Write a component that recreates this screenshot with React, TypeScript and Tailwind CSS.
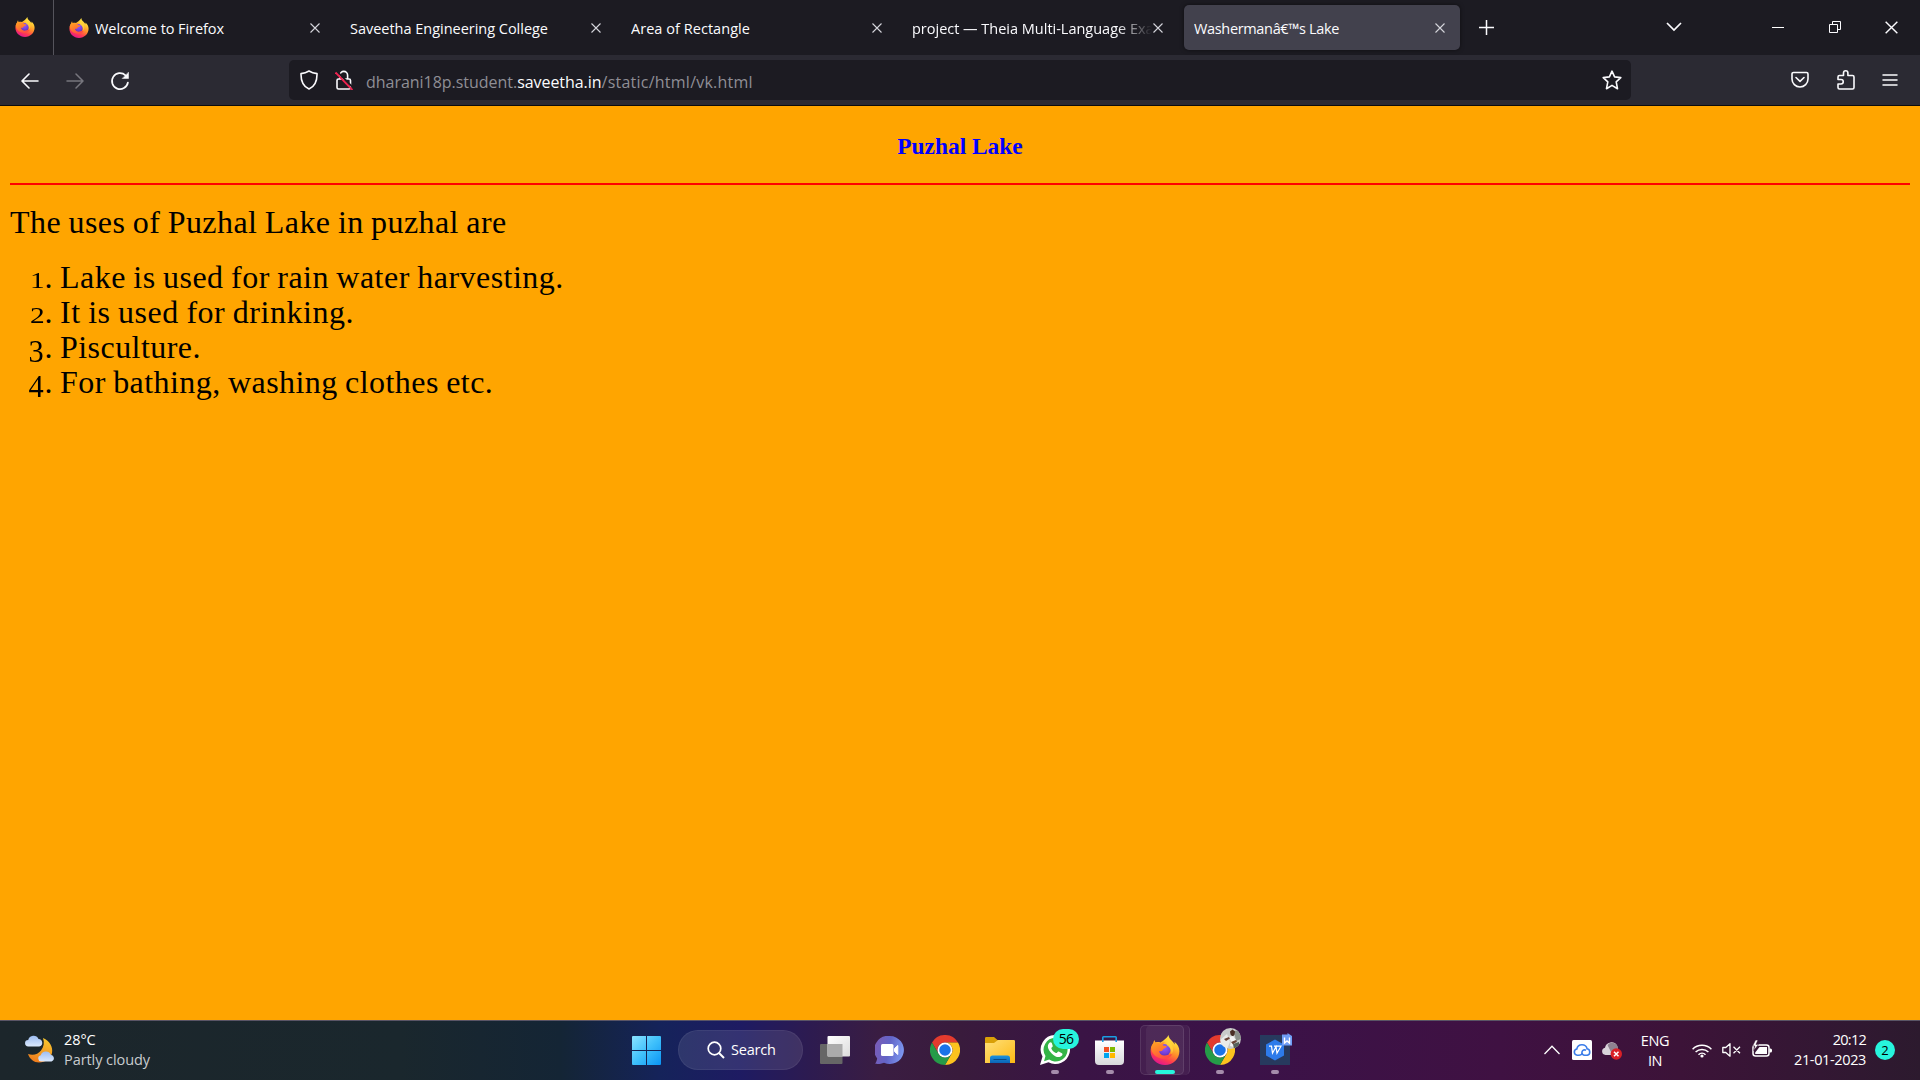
import type { ReactNode } from 'react';

function FirefoxIcon({ id, className }: { id: string; className: string }) {
  return (
    <svg viewBox="0 0 30 30" className={className}>
      <defs>
        <linearGradient id={`${id}-body`} x1="0.8" y1="0" x2="0.35" y2="1">
          <stop offset="0" stopColor="#fff44f" />
          <stop offset="0.3" stopColor="#ffc833" />
          <stop offset="0.55" stopColor="#ff8a2a" />
          <stop offset="0.78" stopColor="#ff3d4e" />
          <stop offset="1" stopColor="#e21590" />
        </linearGradient>
        <radialGradient id={`${id}-globe`} cx="0.5" cy="0.3" r="0.7">
          <stop offset="0" stopColor="#9059ff" />
          <stop offset="0.7" stopColor="#7340d8" />
          <stop offset="1" stopColor="#5b2fb8" />
        </radialGradient>
        <linearGradient id={`${id}-head`} x1="0" y1="0" x2="0.6" y2="1">
          <stop offset="0" stopColor="#ffa51f" />
          <stop offset="0.5" stopColor="#ff7a2e" />
          <stop offset="1" stopColor="#ff4a45" />
        </linearGradient>
      </defs>
      <path
        d="M18.500 0c.2 2.600 1.600 4.100 3.300 5.700 1.200 1.100 2.200 2.400 2.800 3.700.2-1 .1-1.800-.2-2.600 3.300 2.300 5 6 5 9.500C29.400 24 23 30 15 30S.6 24 .6 16.300c0-3.500 1-6.200 2.600-8.400.1-1.100.6-2.100 1.400-3 .1 1 .4 1.800.9 2.500 1.500-.5 3.200-.5 5 0C12 6.500 16.500 4 18.500 0z"
        fill={`url(#${id}-body)`}
      />
      <circle cx="14.500" cy="15" r="6" fill={`url(#${id}-globe)`} />
      <path
        d="M1.200 12.500C2 9.500 3.200 8 5.500 7.400c2 .2 3.500.3 5.200 1.300 1.200-1 2.700-1.400 4.200-1.400-1.300.9-2 1.900-2.200 3 1.200.7 2.800.6 4.100.8-.1 1.700-1.800 2.200-3.200 2.800-1 .5-.9 1.400-1.600 2.200-1 .3-2-.1-3 .3 1 3.300 4 4.800 7.500 4 2.600-.5 4-1.300 5.600-1.100-1.600 3.500-5 5-8.400 4.600C6.500 23.300 1.300 19 1.200 12.500z"
        fill={`url(#${id}-head)`}
      />
      <path d="M18.500 3c1 3.500 4.500 6.500 4.500 11 0 2-.5 3.500-1.300 5-.2-4.200-1.700-7-4.700-8.600-1.500-3 .2-5.400 1.500-7.400z" fill="#ffd93b" opacity="0.700" />
    </svg>
  );
}

function ChromeIcon() {
  return (
    <svg viewBox="0 0 24 24" className="size-[30px]">
      <path d="M1.600 6A12 12 0 0 1 22.400 6L12 6A6 6 0 0 0 6.800 15Z" fill="#e33b2e" />
      <path d="M22.400 6A12 12 0 0 1 12 24L17.200 15A6 6 0 0 0 12 6Z" fill="#fcc31e" />
      <path d="M12 24A12 12 0 0 1 1.600 6L6.800 15A6 6 0 0 0 17.200 15Z" fill="#259b48" />
      <circle cx="12" cy="12" r="6" fill="#fff" />
      <circle cx="12" cy="12" r="4.600" fill="#1a73e8" />
    </svg>
  );
}

function Cross({ className }: { className: string }) {
  return (
    <svg viewBox="0 0 10 10" className={className} fill="none" stroke="currentColor" strokeWidth="1.1">
      <path d="M.5.5l9 9M9.500.5l-9 9" />
    </svg>
  );
}

function Tab({ title, track, icon, active, faded }: { title: string; track: string; icon?: ReactNode; active?: boolean; faded?: boolean }) {
  return (
    <div className={`flex h-[45px] w-[276px] shrink-0 items-center rounded-[5px] text-[#fbfbfe] ${active ? 'bg-[#42414d] pr-[15px] pl-[10px] shadow-[0_0_4px_rgba(0,0,0,0.5)]' : 'pr-4 pl-[9px]'}`}>
      {icon && <div className="mr-[6px] shrink-0">{icon}</div>}
      <div className={`min-w-0 flex-1 overflow-hidden pt-[3px] text-[14.5px] leading-5 whitespace-nowrap ${track} ${faded ? '[mask-image:linear-gradient(to_right,black_205px,transparent_240px)]' : ''}`}>{title}</div>
      <Cross className="size-[10px] shrink-0 text-[#d5d5dc]" />
    </div>
  );
}

function TabStrip() {
  return (
    <div className="flex h-[55px] bg-[#1c1b22]">
      <div className="flex w-[54px] items-center justify-start border-r border-[#55545c] pl-[15px]">
        <FirefoxIcon id="pin" className="mb-px size-5" />
      </div>
      <div className="flex items-start gap-[5px] pt-[5px] pl-[6px]">
        <Tab title="Welcome to Firefox" track="tracking-[-0.07px]" icon={<FirefoxIcon id="fav" className="size-5" />} />
        <Tab title="Saveetha Engineering College" track="tracking-[-0.02px]" />
        <Tab title="Area of Rectangle" track="tracking-[0.04px]" />
        <Tab title="project — Theia Multi-Language Exa" track="tracking-[-0.01px]" faded />
        <Tab title="Washermanâ€™s Lake" track="tracking-[-0.34px]" active />
      </div>
      <svg viewBox="0 0 15 15" className="mt-5 ml-[19px] size-[15px]" stroke="#fbfbfe" strokeWidth="1.500">
        <path d="M7.500 0v15M0 7.500h15" />
      </svg>
      <div className="ml-auto flex h-[54px] items-center text-[#fbfbfe]">
        <svg viewBox="0 0 16 10" className="mr-[90px] h-[10px] w-4" fill="none" stroke="currentColor" strokeWidth="1.700">
          <path d="M1 1l7 7 7-7" />
        </svg>
        <div className="mr-[45px] h-px w-3 bg-white" />
        <svg viewBox="0 0 12 12" className="mr-[44px] size-3" fill="none" stroke="currentColor">
          <path d="M.5 3.500h8v8h-8zM3.500 3.500v-3h8v8h-3" />
        </svg>
        <Cross className="mr-[22px] size-[13px]" />
      </div>
    </div>
  );
}

function Toolbar() {
  return (
    <div className="flex h-[50px] items-center bg-[#2b2a33] text-[#fbfbfe]">
      <svg viewBox="0 0 18 16" className="mt-px ml-[21px] h-4 w-[18px]" fill="none" stroke="currentColor" strokeWidth="1.600" strokeLinecap="round" strokeLinejoin="round">
        <path d="M17 8H1.500M8 1L1 8l7 7" />
      </svg>
      <svg viewBox="0 0 18 16" className="mt-px ml-[27px] h-4 w-[18px] text-[#77767e]" fill="none" stroke="currentColor" strokeWidth="1.500" strokeLinecap="round" strokeLinejoin="round">
        <path d="M1 8h15.500M10 1l7 7-7 7" />
      </svg>
      <svg viewBox="0 0 20 20" className="mt-px ml-[26px] size-5" fill="none" stroke="currentColor" strokeWidth="1.700" strokeLinecap="round">
        <path d="M17.900 11.500A8 8 0 1 1 15.500 4.300" />
        <path d="M18.500 1.500v6h-6z" fill="currentColor" strokeWidth="0.500" />
      </svg>
      <div className="ml-[159px] flex h-10 w-[1342px] items-center rounded-[5px] bg-[#1c1b22]">
        <svg viewBox="0 0 18 20" className="ml-[11px] h-5 w-[18px]" fill="none" stroke="currentColor" strokeWidth="1.600" strokeLinejoin="round">
          <path d="M9 1c2.400 1.500 5 2.300 8 2.600C17.200 11.500 14.500 16.500 9 19 3.500 16.500.8 11.500 1 3.600 4 3.300 6.600 2.500 9 1z" />
        </svg>
        <svg viewBox="0 0 18 20" className="ml-[17px] h-5 w-[18px]" fill="none" stroke="currentColor" strokeWidth="1.600">
          <rect x="2" y="9" width="13.500" height="10" rx="1.500" />
          <path d="M5 9V5.200a3.800 3.800 0 0 1 7.600 0V9" />
          <path d="M2 1.500L18 17.500" stroke="#1c1b22" strokeWidth="1.800" />
          <path d="M.5 2.500L17.500 20" stroke="#f02350" strokeWidth="1.900" />
        </svg>
        <div className="mt-[4px] ml-[13px] text-[16px] leading-6 whitespace-nowrap text-[#8f8e95]">
          <span className="tracking-[-0.03px]">dharani18p.student.</span>
          <span className="tracking-[-0.05px] text-[#fbfbfe]">saveetha.in</span>
          <span className="tracking-[0.24px]">/static/html/vk.html</span>
        </div>
        <svg viewBox="0 0 20 20" className="mr-[9px] ml-auto size-5" fill="none" stroke="currentColor" strokeWidth="1.600" strokeLinejoin="round">
          <path d="M10 1.200l2.600 5.700 6.200.7-4.600 4.200 1.300 6.900L10 15.400l-5.500 3.300 1.300-6.900L1.200 7.600l6.200-.7z" />
        </svg>
      </div>
      <svg viewBox="0 0 18 18" className="ml-auto size-[18px]" fill="none" stroke="currentColor" strokeWidth="1.600" strokeLinecap="round" strokeLinejoin="round">
        <path d="M2.500 1.500h13a1.500 1.500 0 0 1 1.500 1.500v5a8 8 0 0 1-16 0V3a1.500 1.500 0 0 1 1.500-1.500zM5 6.500l4 3.800 4-3.800" />
      </svg>
      <svg viewBox="0 0 18 20" className="ml-[28px] h-5 w-[18px]" fill="none" stroke="currentColor" strokeWidth="1.600" strokeLinejoin="round">
        <path d="M2.500 5.500h4V3a2.200 2.200 0 0 1 4.400 0v2.500h4.600a1.500 1.500 0 0 1 1.500 1.500v10.500a1.500 1.500 0 0 1-1.500 1.500h-13A1.500 1.500 0 0 1 1 17.500V14h3a2 2 0 0 0 0-4.500H1V7a1.500 1.500 0 0 1 1.500-1.500z" />
      </svg>
      <svg viewBox="0 0 16 14" className="mr-[22px] mb-px ml-[27px] h-[14px] w-4" stroke="currentColor" strokeWidth="1.500" strokeLinecap="round">
        <path d="M1 2h14M1 7h14M1 12h14" />
      </svg>
    </div>
  );
}

/* Old-style figures: 1 and 2 sit at x-height, 3 and 4 hang below the baseline. */
const SMALL = 'inline-block origin-bottom-right scale-x-125 text-[23.5px] leading-[35px]';
const HANGING = 'relative top-[4px] mr-px inline-block scale-x-95';

const items = [
  { n: '1', figure: SMALL, text: 'Lake is used for rain water harvesting.', track: 'tracking-[0.47px]' },
  { n: '2', figure: SMALL, text: 'It is used for drinking.', track: 'tracking-[0.53px]' },
  { n: '3', figure: HANGING, text: 'Pisculture.', track: 'tracking-[0.45px]' },
  { n: '4', figure: HANGING, text: 'For bathing, washing clothes etc.', track: 'tracking-[0.43px]' },
];

function Page() {
  return (
    <main className='h-[914px] px-[10px] font-["Liberation_Serif",serif] text-[32px] leading-[35px] text-black'>
      <h1 className="pt-[27px] text-center text-[23.4px] leading-[27px] font-bold text-[#0000ff]">Puzhal Lake</h1>
      <div className="mt-[23px] h-[2px] bg-[#ff0000]" />
      <p className="mt-[20px] tracking-[0.43px] [word-spacing:-1px]">The uses of Puzhal Lake in puzhal are</p>
      <ol className="mt-[20px] [word-spacing:-1px]">
        {items.map((item) => (
          <li key={item.n} className="flex h-[35px] whitespace-nowrap">
            <span className="w-[42.5px] text-right">
              <span className={item.figure}>{item.n}</span>.
            </span>
            <span className={`ml-[7.500px] ${item.track}`}>{item.text}</span>
          </li>
        ))}
      </ol>
    </main>
  );
}

function TaskbarApp({ children, running, active }: { children?: ReactNode; running?: boolean; active?: boolean }) {
  return (
    <div className="relative flex h-[60px] w-[55px] shrink-0 items-center justify-center">
      {active && <div className="absolute top-[5px] left-[9px] h-[50px] w-[44px] rounded-[5px] border-r border-white/10 bg-white/5" />}
      {active && <div className="absolute top-[5px] left-[3px] h-[50px] w-[44px] rounded-[5px] border border-white/10 bg-white/5" />}
      {children}
      {running && <div className="absolute bottom-[6px] h-1 w-2 rounded-full bg-[#a58cab]" />}
      {active && <div className="absolute bottom-[6px] h-1 w-5 rounded-full bg-[#27f5dd]" />}
    </div>
  );
}

function Taskbar() {
  return (
    <footer className="flex h-[60px] items-center bg-[linear-gradient(to_right,#1c262b_0px,#1a272d_400px,#142535_560px,#15235a_660px,#1e1b62_740px,#2d1b50_810px,#3a1d42_880px,#391b3c_960px,#3a1445_1080px,#3b1248_1250px,#3f1142_1500px,#3c1338_1680px,#331733_1820px,#2c1a2e_1920px)] text-[14.5px] leading-5 text-white shadow-[inset_0_1px_0_#5a5566]">
      <div className="flex w-[620px] items-center pl-[25px]">
        <svg viewBox="0 0 30 28" className="mb-[3px] h-7 w-[30px]">
          <defs>
            <linearGradient id="moon" x1="0.600" y1="0" x2="0.300" y2="1">
              <stop offset="0" stopColor="#f7c62f" />
              <stop offset="1" stopColor="#ef7a1c" />
            </linearGradient>
            <linearGradient id="cloud" x1="0" y1="0" x2="0" y2="1">
              <stop offset="0" stopColor="#9dbdf2" />
              <stop offset="1" stopColor="#dbe9fd" />
            </linearGradient>
          </defs>
          <path d="M18 3c7 3 10 9 9 15-1.500 6-6.500 9.500-13 9.500-5 0-9-3-11-8.500 5 1.500 10 .5 13-3.500s3.500-8 2-12.500z" fill="url(#moon)" />
          <path d="M3.500 11.500a3.300 3.300 0 0 1-.3-6.600A5.500 5.500 0 0 1 13.500 4a3.800 3.800 0 0 1 .8 7.500z" fill="url(#cloud)" />
          <path d="M16 26.500a3.200 3.200 0 0 1-.2-6.300 5.400 5.400 0 0 1 10-.5 3.500 3.500 0 0 1 .7 6.800z" fill="url(#cloud)" />
        </svg>
        <div className="ml-[9px]">
          <div className="tracking-[-0.1px]">28°C</div>
          <div className="tracking-[-0.07px] text-[#c8cccf]">Partly cloudy</div>
        </div>
      </div>

      <TaskbarApp>
        <svg viewBox="0 0 29 29" className="ml-[-2px] size-[29px]">
          <defs>
            <linearGradient id="win" x1="0" y1="0" x2="1" y2="1">
              <stop offset="0" stopColor="#8be3ff" />
              <stop offset="0.500" stopColor="#3fc0fb" />
              <stop offset="1" stopColor="#0a94f5" />
            </linearGradient>
          </defs>
          <path d="M1 0h13v14H0V1a1 1 0 0 1 1-1zM15 0h13a1 1 0 0 1 1 1v13H15zM0 15h14v14H1a1 1 0 0 1-1-1zM15 15h14v13a1 1 0 0 1-1 1H15z" fill="url(#win)" />
        </svg>
      </TaskbarApp>
      <div className="ml-[3px] flex h-10 w-[125px] items-center rounded-full border border-white/[0.06] bg-white/10">
        <svg viewBox="0 0 18 18" className="ml-[28px] size-[18px]" fill="none" stroke="white" strokeWidth="1.700">
          <circle cx="7.500" cy="7.500" r="6.300" />
          <path d="M12 12l5 5" strokeWidth="2" />
        </svg>
        <span className="ml-[6px] tracking-[-0.2px]">Search</span>
      </div>
      <div className="ml-[4px] flex">
        <TaskbarApp>
          <svg viewBox="0 0 30 28" className="h-7 w-[30px]">
            <defs>
              <linearGradient id="tv" x1="0" y1="0" x2="1" y2="1">
                <stop offset="0" stopColor="#ffffff" />
                <stop offset="1" stopColor="#dcdcdc" />
              </linearGradient>
            </defs>
            <rect y="8" width="22.500" height="20" rx="1" fill="#666" />
            <rect x="7.500" width="22.500" height="20.500" rx="1" fill="url(#tv)" />
            <path d="M7.500 8h15v12.500h-15z" fill="#ababab" />
          </svg>
        </TaskbarApp>
        <TaskbarApp>
          <svg viewBox="0 0 29 28" className="h-7 w-[29px]">
            <defs>
              <linearGradient id="chat" x1="0" y1="0.300" x2="1" y2="0.500">
                <stop offset="0" stopColor="#7b5cb5" />
                <stop offset="0.500" stopColor="#6264c7" />
                <stop offset="1" stopColor="#7c97f0" />
              </linearGradient>
            </defs>
            <path d="M15 0a14 14 0 1 1-6 26.700C6 28 3 28 .2 27.800c1-1.800 1.700-3.500 2-5.300A14 14 0 0 1 15 0z" fill="url(#chat)" />
            <rect x="6" y="8" width="12.500" height="12" rx="1.500" fill="#fff" />
            <path d="M19.500 12.500l3.300-3v9l-3.300-3z" fill="#fff" stroke="#fff" strokeLinejoin="round" />
          </svg>
        </TaskbarApp>
        <TaskbarApp><ChromeIcon /></TaskbarApp>
        <TaskbarApp>
          <svg viewBox="0 0 30 26" className="h-[26px] w-[30px]">
            <defs>
              <linearGradient id="folder" x1="0" y1="0" x2="1" y2="1">
                <stop offset="0" stopColor="#ffe07a" />
                <stop offset="1" stopColor="#fcb913" />
              </linearGradient>
              <linearGradient id="pocket" x1="0" y1="0" x2="0" y2="1">
                <stop offset="0" stopColor="#1a93e0" />
                <stop offset="1" stopColor="#0b64b4" />
              </linearGradient>
            </defs>
            <path d="M0 1.200Q0 0 1.200 0H9l3.500 3H29v6H0z" fill="#d9a007" />
            <path d="M0 6h9l4-3h15.800Q30 3 30 4.200V26H0z" fill="url(#folder)" />
            <path d="M5 26v-5a2.500 2.500 0 0 1 2.500-2.500h15A2.500 2.500 0 0 1 25 21v5z" fill="url(#pocket)" />
            <path d="M8.500 22.500h13" stroke="#074a86" />
          </svg>
        </TaskbarApp>
        <TaskbarApp running>
          <svg viewBox="0 0 30 30" className="size-[30px]">
            <path d="M15.500 0a14.500 14.500 0 1 1-7 27.200L0 30l2.500-8.500A14.500 14.500 0 0 1 15.500 0z" fill="#fff" />
            <path d="M15.500 2.700a11.900 11.900 0 1 1-6.300 21.900L4 26.200l1.500-5.200A11.900 11.900 0 0 1 15.500 2.700z" fill="#33b446" />
            <path d="M11.800 8c-.7-1.200-1.600-.9-2.400-.2-3 3-1.200 7.200 2.300 10.700 3.600 3.600 7.500 4.800 10 2.300.8-.9 1.200-2 .2-2.600l-2.700-1.500c-.9-.5-1.400 0-2 .8-.6.7-1 .6-1.800.2-1.700-.9-3-2.200-3.800-3.800-.4-.7-.3-1.200.3-1.700.7-.6 1-1 .7-1.800z" fill="#fff" />
          </svg>
          <div className="absolute top-[9px] left-[26px] flex h-5 w-[26px] items-center justify-center rounded-full bg-[#27f5dd] text-[14px] tracking-[-0.7px] text-black">56</div>
        </TaskbarApp>
        <TaskbarApp running>
          <svg viewBox="0 0 29 29" className="size-[29px]">
            <defs>
              <linearGradient id="bag" x1="0" y1="0" x2="0" y2="1">
                <stop offset="0" stopColor="#ffffff" />
                <stop offset="1" stopColor="#d8d8dc" />
              </linearGradient>
            </defs>
            <path d="M0 4.500h29V25a4 4 0 0 1-4 4H4a4 4 0 0 1-4-4z" fill="url(#bag)" />
            <path d="M7.800 6V1.500Q7.800.8 8.500.8h12q.7 0 .7.700V6" fill="none" stroke="#1b9de2" strokeWidth="1.600" />
            <path d="M9 11h5v5H9z" fill="#f25022" />
            <path d="M15 11h5v5h-5z" fill="#7fba00" />
            <path d="M9 17h5v5H9z" fill="#00a4ef" />
            <path d="M15 17h5v5h-5z" fill="#ffb900" />
          </svg>
        </TaskbarApp>
        <TaskbarApp active>
          <FirefoxIcon id="task" className="relative size-[30px]" />
        </TaskbarApp>
        <TaskbarApp running>
          <ChromeIcon />
          <svg viewBox="0 0 21 21" className="absolute top-[8px] left-[28px] size-[21px]">
            <defs>
              <clipPath id="avatar"><circle cx="10.500" cy="10.500" r="10.500" /></clipPath>
            </defs>
            <g clipPath="url(#avatar)">
              <path d="M0 0h21v21H0z" fill="#c9ccc9" />
              <path d="M0 12l7-6 3 8-3 7H0z" fill="#e9ece9" />
              <path d="M14 3l7-1v9l-5 2z" fill="#8b918b" />
              <path d="M10 3.500l2.500-2 2.500 2-.5 3.500-2 1.500-2-2z" fill="#4a2e25" />
              <path d="M8 9l5-1 3 4-2 7-4-1 1-5z" fill="#f4f4f4" />
              <path d="M4 11l5-2 1 1.500-4 2.500zM11 14l5-2 1 1.500-4 3z" fill="#6a4436" />
              <path d="M13 16l6-2v4l-5 3z" fill="#55605a" />
            </g>
          </svg>
        </TaskbarApp>
        <TaskbarApp running>
          <svg viewBox="0 0 33 32" className="mt-[-2px] ml-[3px] h-8 w-[33px]">
            <path d="M0 2h30v30H0z" fill="#273a5e" />
            <path d="M15 6.500l9 5v11l-9 5-9-5v-11z" fill="#2d7bea" />
            <path d="M9 13.200h2.500l1 7 3.500-6.500 1 6.500 4-7h-7" fill="none" stroke="#fff" strokeWidth="1.200" />
            <path d="M22 1.500h5.500V0l4.500 3v9.500H22z" fill="#6f9df5" />
            <path d="M24.500 4.500v5.500l2.500-2 2.500 2V4.500" fill="none" stroke="#fff" strokeWidth="1.400" />
          </svg>
        </TaskbarApp>
      </div>

      <div className="ml-auto flex items-center">
        <svg viewBox="0 0 16 10" className="h-[10px] w-4" fill="none" stroke="white" strokeWidth="1.300">
          <path d="M.5 9L8 1.200 15.500 9" />
        </svg>
        <svg viewBox="0 0 20 20" className="ml-3 size-5">
          <rect width="20" height="20" rx="1.500" fill="#fff" />
          <path d="M7.800 15.300H5.200a3.200 3.200 0 0 1-.4-6.300 5.300 5.300 0 0 1 10.300-.3 3.400 3.400 0 0 1 .2 6.600h-2.600a2.700 2.700 0 1 1 1.300-5" fill="none" stroke="#3b7de9" strokeWidth="1.600" />
          <path d="M7.500 15.300c1.500-.3 2.300-1.200 3-2.500" fill="none" stroke="#3b7de9" strokeWidth="1.500" />
        </svg>
        <svg viewBox="0 0 20 18" className="mt-[2px] ml-[10px] h-[18px] w-5">
          <path d="M3.500 13A3.700 3.700 0 0 1 3 5.700 6.500 6.500 0 0 1 15 3.500c1 2 .5 9.500-4 9.500z" fill="#d9d3da" />
          <path d="M5.500 3A6 6 0 0 1 16 5.500V8L9 10z" fill="#8e8290" />
          <circle cx="14.300" cy="12" r="5.700" fill="#d92027" />
          <path d="M12 9.800l4.500 4.500M16.500 9.800L12 14.300" stroke="#fff" strokeWidth="1.500" />
        </svg>
        <div className="mt-[2px] ml-[18px] w-[30px] text-center tracking-[-0.4px]">
          <div>ENG</div>
          <div>IN</div>
        </div>
        <svg viewBox="0 0 20 15" className="ml-[22px] h-[15px] w-5" fill="none" stroke="white" strokeWidth="1.500">
          <path d="M.6 6.200a13.300 13.300 0 0 1 18.800 0M3.600 9a9.200 9.200 0 0 1 12.800 0M6.500 11.700a5 5 0 0 1 7 0" />
          <circle cx="10" cy="13" r="1.600" fill="#fff" stroke="none" />
        </svg>
        <svg viewBox="0 0 19 14" className="ml-[10px] h-[14px] w-[19px]" fill="none" stroke="white" strokeWidth="1.300" strokeLinejoin="round">
          <path d="M.8 4.500h3L8 .8v12.400l-4.200-3.700h-3zM11.500 3.800l6.500 6.500M18 3.800l-6.500 6.500" />
        </svg>
        <svg viewBox="0 0 20 17" className="mb-[3px] ml-[11px] h-[17px] w-5">
          <rect x="1" y="5" width="16" height="11" rx="2.500" fill="none" stroke="#fff" strokeWidth="1.500" />
          <path d="M17.500 8.500h1a1.500 1.500 0 0 1 1.500 1.500v1a1.500 1.500 0 0 1-1.500 1.500h-1z" fill="#fff" />
          <path d="M7.500 7h7.500v7H3.200v-1.500z" fill="#fff" />
          <path d="M3.500 0L.5 6h2.300L1.800 10.500 6.500 4.500H4L6 0z" fill="#fff" stroke="#37162f" strokeWidth="0.600" />
        </svg>
        <div className="ml-[20px] w-[74px] text-right">
          <div className="tracking-[-0.75px]">20:12</div>
          <div className="tracking-[-0.37px]">21-01-2023</div>
        </div>
        <div className="mr-[25px] ml-[9px] flex size-5 items-center justify-center rounded-full bg-[#27f5dd] text-[13px] text-black">2</div>
      </div>
    </footer>
  );
}

export default function App() {
  return (
    <div className='flex h-[1080px] w-[1920px] flex-col overflow-hidden bg-[#ffa500] font-["Open_Sans",sans-serif]'>
      <TabStrip />
      <Toolbar />
      <div className="h-px bg-[#0c0c0d]" />
      <Page />
      <Taskbar />
    </div>
  );
}
